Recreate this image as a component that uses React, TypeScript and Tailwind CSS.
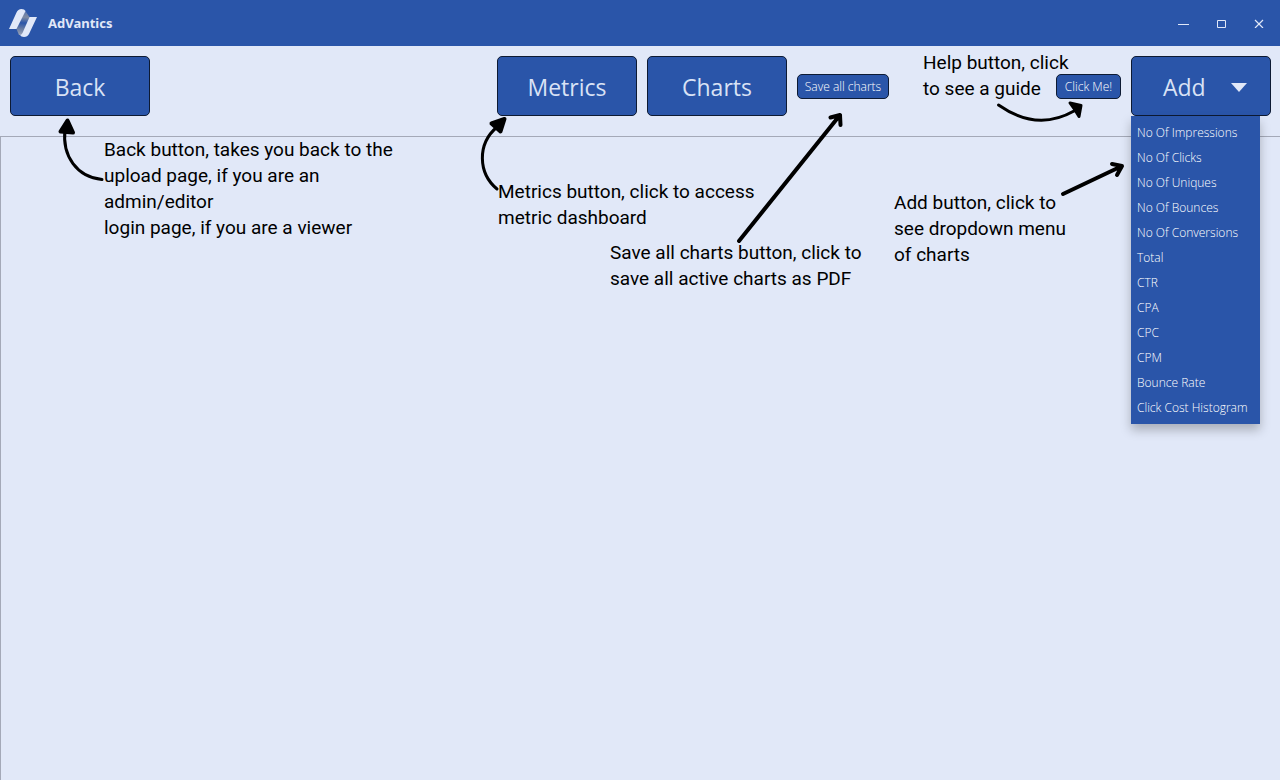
import type { ReactNode } from "react";

const chartTypes = [
  "No Of Impressions",
  "No Of Clicks",
  "No Of Uniques",
  "No Of Bounces",
  "No Of Conversions",
  "Total",
  "CTR",
  "CPA",
  "CPC",
  "CPM",
  "Bounce Rate",
  "Click Cost Histogram",
];

function Logo() {
  return (
    <svg className="h-[30px] w-[30px]" viewBox="0 0 30 30" aria-hidden="true">
      <defs>
        <linearGradient id="fold" gradientUnits="userSpaceOnUse" x1="16" y1="3" x2="14" y2="27">
          <stop offset="0" stopColor="#5a75ad" />
          <stop offset="0.25" stopColor="#7f8ba3" />
          <stop offset="0.5" stopColor="#2a55a9" />
          <stop offset="0.75" stopColor="#6a7da3" />
          <stop offset="1" stopColor="#98a2b8" />
        </linearGradient>
      </defs>
      <path d="M17 2.500L21.500 9L14.500 27L11 27L8.500 21Z" fill="url(#fold)" />
      <path d="M1 21L8.500 4.500Q10 1 13.500 1Q16.500 1 17.500 3L8.500 21Z" fill="#e1e8f8" />
      <path d="M21.500 9H29L21 26Q19.500 29 16 29Q13 29 12 27Q13.500 27 14.500 25Z" fill="#e1e8f8" />
    </svg>
  );
}

function BigButton({ children }: { children: ReactNode }) {
  return (
    <button className="h-[60px] w-[140px] shrink-0 rounded-[5px] border border-[#0d1a33] bg-[#2a55a9] pt-0.5 text-[23px] text-[#d9e2f5]">
      {children}
    </button>
  );
}

function SmallButton({ children, width }: { children: ReactNode; width: string }) {
  return (
    <button className={`h-[25px] ${width} shrink-0 rounded-[5px] border border-[#0d1a33] bg-[#2a55a9] pt-px text-xs font-light whitespace-nowrap text-white`}>
      {children}
    </button>
  );
}

function Note({ className, lines }: { className: string; lines: string[] }) {
  return (
    <p className={`absolute font-[Roboto,sans-serif] text-[19px] leading-[26px] whitespace-nowrap text-black ${className}`}>
      {lines.map((line) => (
        <span key={line} className="block">
          {line}
        </span>
      ))}
    </p>
  );
}

function Arrows() {
  return (
    <svg
      className="pointer-events-none absolute top-0 left-0"
      width="1280"
      height="300"
      viewBox="0 0 1280 300"
      fill="none"
      stroke="#000"
      strokeLinecap="round"
      strokeLinejoin="round"
      aria-hidden="true"
    >
      <g strokeWidth="3">
        <path d="M102 179.500C77 177 62 156 65 130" />
        <path d="M67.500 120.500L60.500 131.500L73 132.500Z" fill="#000" strokeWidth="4" />
        <path d="M497 189C478 173 477 144 497 127" />
        <path d="M504.500 119L491.500 123.500L500.500 131.500Z" fill="#000" strokeWidth="4" />
        <path d="M998.500 105Q1037 132 1074 111" />
        <path d="M1070 103L1081 105.500L1079 116.500L1075 110Z" fill="#000" />
      </g>
      <g strokeWidth="4">
        <path d="M739 241L840 115M830.500 117.500L840 115L840.500 125" />
        <path d="M1063 194L1122 166M1112 164L1122 166L1117 175" />
      </g>
    </svg>
  );
}

export default function App() {
  return (
    <div className="relative flex min-h-screen flex-col bg-[#e1e8f8] font-['Open_Sans',sans-serif]">
      <header className="flex h-[46px] items-center bg-[#2a55a9] pl-2 text-[#e1e8f8]">
        <Logo />
        <h1 className="ml-2.5 pt-0.5 font-['Noto_Sans',sans-serif] text-[13px] font-bold">AdVantics</h1>
        <div className="ml-auto flex pr-0.5">
          <button aria-label="Minimize" className="grid h-[46px] w-[38px] place-items-center">
            <svg width="12" height="12" viewBox="0 0 12 12" stroke="currentColor" aria-hidden="true">
              <path d="M1 7.500H12" />
            </svg>
          </button>
          <button aria-label="Maximize" className="grid h-[46px] w-[38px] place-items-center">
            <svg width="10" height="10" viewBox="0 0 10 10" fill="none" stroke="currentColor" aria-hidden="true">
              <path d="M1.500 2.500H9.500V9.500H1.500Z" />
            </svg>
          </button>
          <button aria-label="Close" className="grid h-[46px] w-[38px] place-items-center">
            <svg width="10" height="10" viewBox="0 0 10 10" stroke="currentColor" strokeWidth="1.2" aria-hidden="true">
              <path d="M1 2L9 10M9 2L1 10" />
            </svg>
          </button>
        </div>
      </header>

      <nav className="grid h-[90px] grid-cols-[477fr_auto_474fr] gap-2.5 pt-2.5 pr-[9px] pl-2.5">
        <div>
          <BigButton>Back</BigButton>
        </div>
        <div className="flex gap-2.5">
          <BigButton>Metrics</BigButton>
          <BigButton>Charts</BigButton>
        </div>
        <div className="flex h-[60px] items-center gap-2.5">
          <SmallButton width="w-[92px]">Save all charts</SmallButton>
          <div className="flex-1" />
          <SmallButton width="w-[65px]">Click Me!</SmallButton>
          <div className="relative">
            <button
              aria-expanded="true"
              className="flex h-[60px] w-[140px] items-center justify-between rounded-[5px] border border-[#0d1a33] bg-[#2a55a9] pt-0.5 pr-[23px] pl-[31px] text-[23px] text-[#d9e2f5]"
            >
              Add
              <svg width="16" height="9" viewBox="0 0 16 9" fill="#e1e8f8" aria-hidden="true">
                <path d="M0 0H16L8 9Z" />
              </svg>
            </button>
            <ul className="absolute top-[60px] left-0 z-10 w-[129px] bg-[#2a55a9] py-1 shadow-[0_6px_10px_rgba(0,0,0,0.25)]">
              {chartTypes.map((name) => (
                <li key={name}>
                  <button className="block h-[25px] w-full pt-px pl-1.5 text-left text-xs font-light whitespace-nowrap text-white">
                    {name}
                  </button>
                </li>
              ))}
            </ul>
          </div>
        </div>
      </nav>

      <main className="flex-1 border-t border-l border-[#a4a9b8]" />

      <Note
        className="top-[137px] left-[104px]"
        lines={[
          "Back button, takes you back to the",
          "upload page, if you are an",
          "admin/editor",
          "login page, if you are a viewer",
        ]}
      />
      <Note
        className="top-[179px] left-[498px]"
        lines={["Metrics button, click to access", "metric dashboard"]}
      />
      <Note
        className="top-[240px] left-[610px]"
        lines={["Save all charts button, click to", "save all active charts as PDF"]}
      />
      <Note className="top-[50px] left-[923px]" lines={["Help button, click", "to see a guide"]} />
      <Note
        className="top-[190px] left-[894px]"
        lines={["Add button, click to", "see dropdown menu", "of charts"]}
      />
      <Arrows />
    </div>
  );
}
